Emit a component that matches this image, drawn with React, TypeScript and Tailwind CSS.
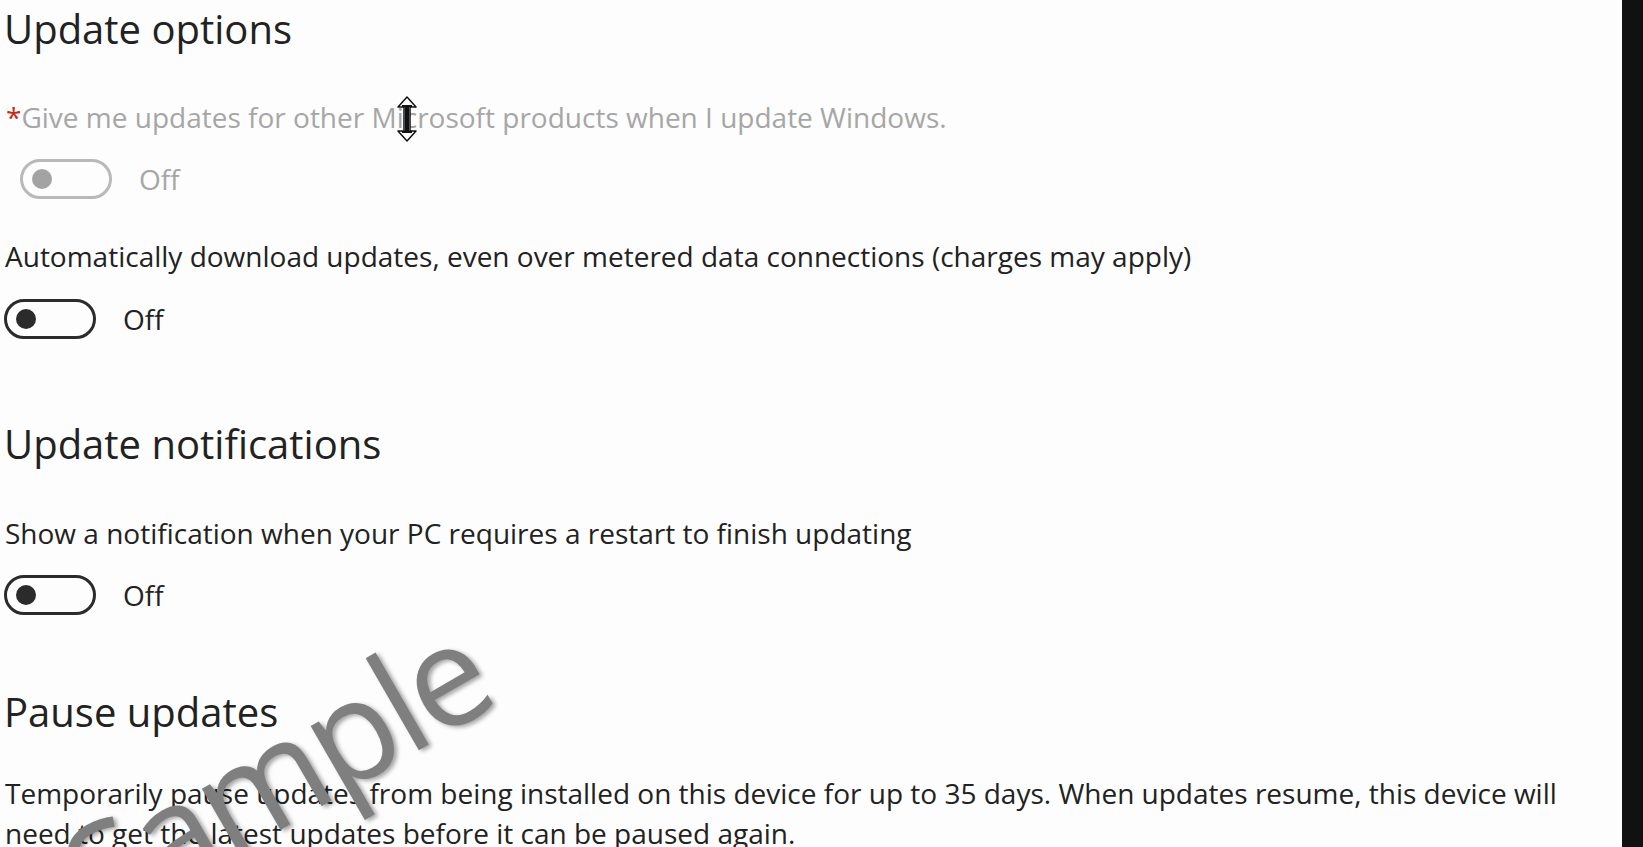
import React from 'react';

const FONT = { fontFamily: '"Open Sans", "Noto Sans", sans-serif' };

type ToggleProps = { disabled?: boolean };

const Toggle: React.FC<ToggleProps> = ({ disabled }) => (
    <div
        className={`w-[92px] h-[40px] rounded-full border-[3px] flex items-center pl-[9px] ${disabled ? 'border-[#b9b9b9]' : 'border-[#2b2b2b]'}`}
    >
        <div className={`w-[20px] h-[20px] rounded-full ${disabled ? 'bg-[#a3a3a3]' : 'bg-[#2b2b2b]'}`} />
    </div>
);

const ResizeCursor = () => (
    <svg width="22" height="46" viewBox="0 0 22 46" className="absolute left-[396px] top-[96px]">
        <path d="M11 1 L20 11 L14 11 L14 35 L20 35 L11 45 L2 35 L8 35 L8 11 L2 11 Z" fill="#fff" stroke="#111" strokeWidth="1.5" strokeLinejoin="round" />
        <rect x="9" y="9" width="4" height="28" fill="#111" />
        <rect x="6" y="9" width="10" height="2" fill="#111" />
        <rect x="6" y="35" width="10" height="2" fill="#111" />
    </svg>
);

export default function App() {
    return (
        <div className="relative w-[1643px] h-[847px] overflow-hidden bg-[#fdfdfd] flex" style={FONT}>
            <div className="flex-1 flex flex-col pl-[4px] pt-[3px] text-[#222222]">
                <h2 className="text-[40px] leading-[52px] font-normal">Update options</h2>

                <p className="mt-[42px] text-[28px] leading-[40px] text-[#a6a6a6] pl-[2px]">
                    <span className="text-[#c42b1c]">*</span>Give me updates for other Microsoft products when I update Windows.
                </p>
                <div className="mt-[22px] ml-[16px] flex items-center gap-[27px]">
                    <Toggle disabled />
                    <span className="text-[28px] leading-[40px] text-[#a6a6a6]">Off</span>
                </div>

                <p className="mt-[37px] text-[28px] leading-[40px] pl-[1px]">
                    Automatically download updates, even over metered data connections (charges may apply)
                </p>
                <div className="mt-[23px] flex items-center gap-[27px]">
                    <Toggle />
                    <span className="text-[28px] leading-[40px]">Off</span>
                </div>

                <h2 className="mt-[79px] text-[40px] leading-[52px] font-normal">Update notifications</h2>

                <p className="mt-[43px] text-[28px] leading-[40px] pl-[1px]">
                    Show a notification when your PC requires a restart to finish updating
                </p>
                <div className="mt-[22px] flex items-center gap-[27px]">
                    <Toggle />
                    <span className="text-[28px] leading-[40px]">Off</span>
                </div>

                <h2 className="mt-[71px] text-[40px] leading-[52px] font-normal">Pause updates</h2>

                <p className="mt-[35px] text-[28px] leading-[40px] pl-[1px] max-w-[1600px]">
                    Temporarily pause updates from being installed on this device for up to 35 days. When updates resume, this device will need to get the latest updates before it can be paused again.
                </p>
            </div>
            <div className="w-[21px] bg-[#111111]" />

            <ResizeCursor />

            {/* watermark */}
            <div
                className="absolute left-[110px] top-[807px] text-[140px] leading-none tracking-[-4px] text-[#7f7f7f] origin-bottom-left -rotate-[30deg] select-none whitespace-nowrap"
                style={{ textShadow: '2px 3px 4px rgba(0,0,0,0.35)' }}
            >
                Sample
            </div>
        </div>
    );
}
